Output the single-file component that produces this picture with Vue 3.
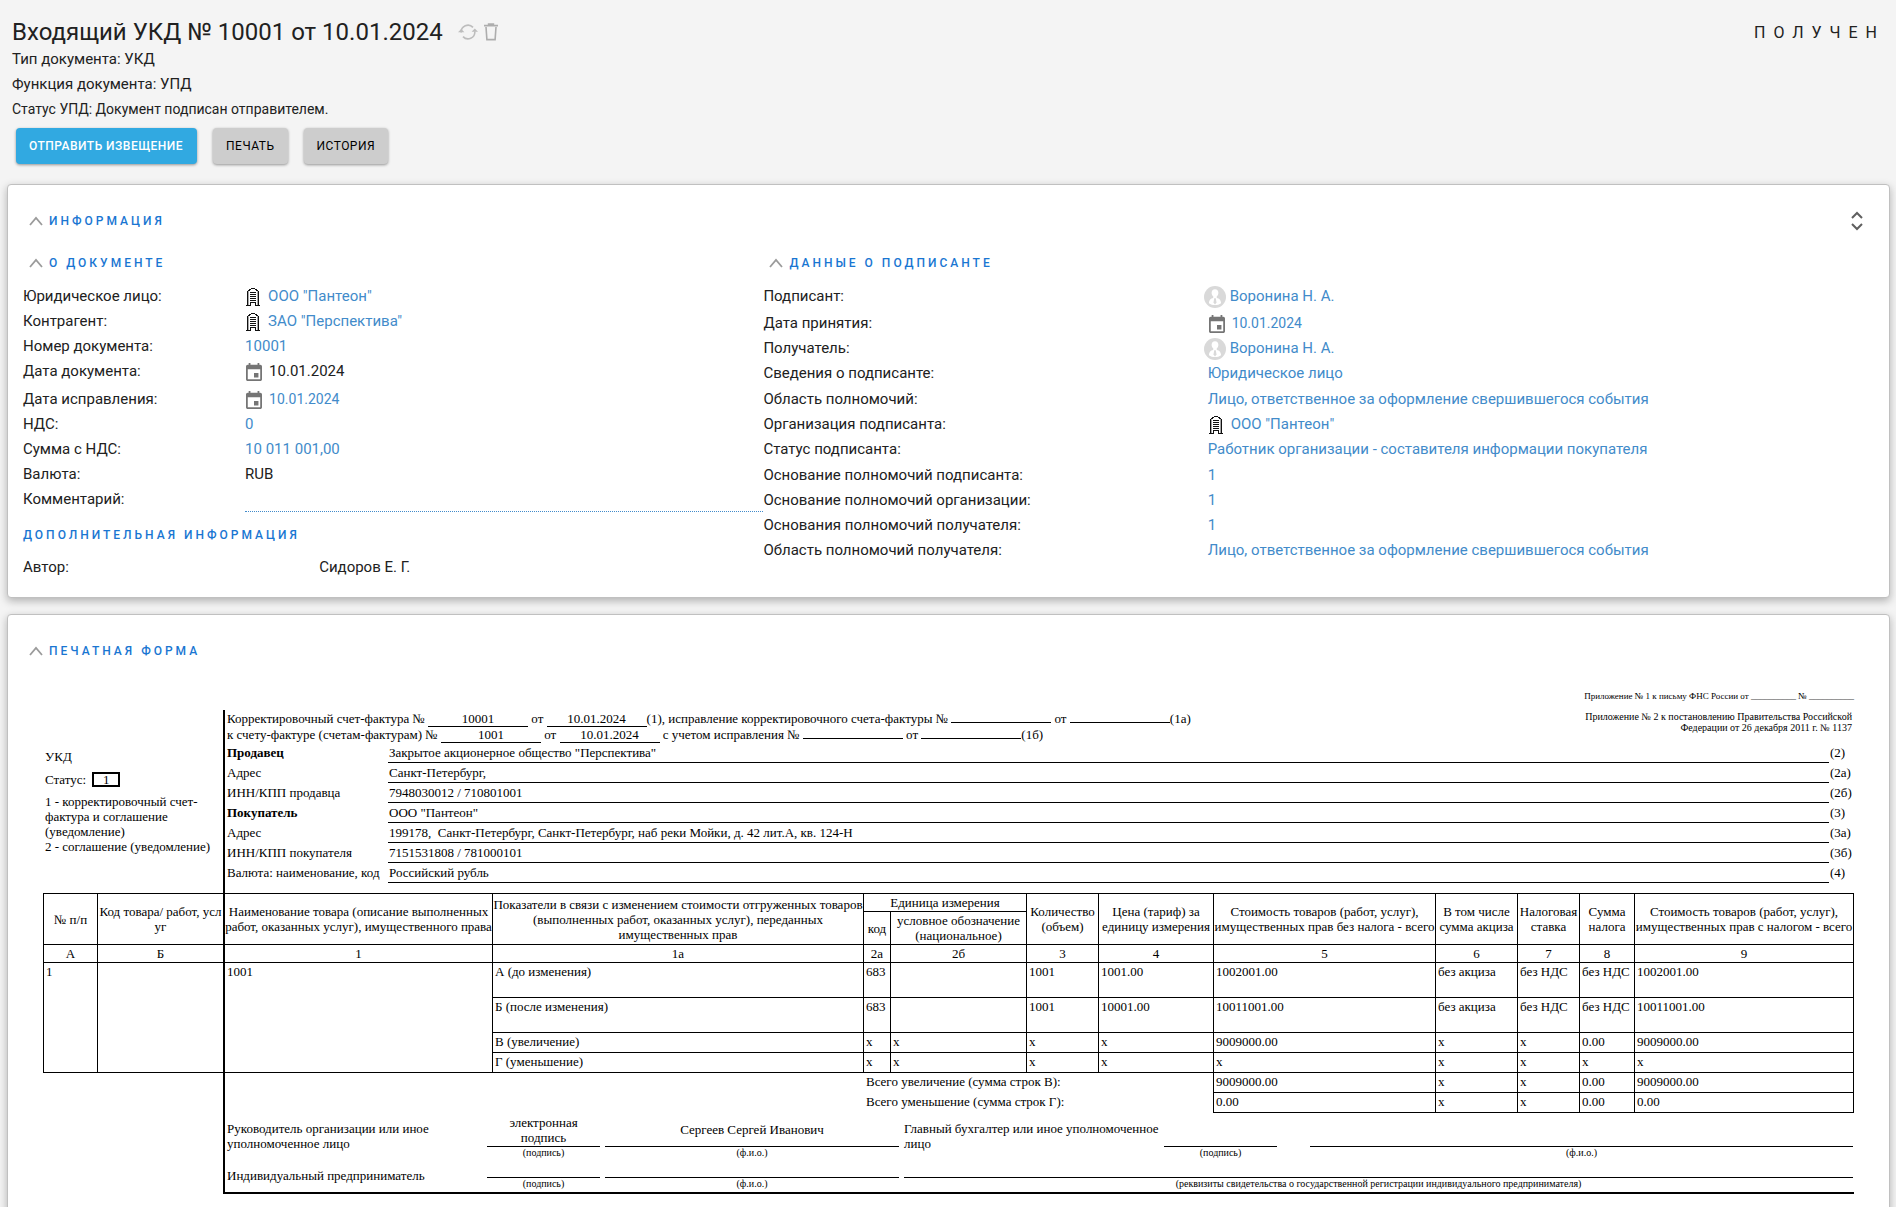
<script setup>
import { ref } from 'vue'

const comment = ref('')

const documentFacts = [
  { label: 'Юридическое лицо:', value: 'ООО "Пантеон"', icon: 'org', link: true },
  { label: 'Контрагент:', value: 'ЗАО "Перспектива"', icon: 'org', link: true },
  { label: 'Номер документа:', value: '10001', link: true },
  { label: 'Дата документа:', value: '10.01.2024', icon: 'date' },
  { label: 'Дата исправления:', value: '10.01.2024', icon: 'date', link: true, small: true },
  { label: 'НДС:', value: '0', link: true },
  { label: 'Сумма с НДС:', value: '10 011 001,00', link: true },
  { label: 'Валюта:', value: 'RUB' },
]

const signerFacts = [
  { label: 'Подписант:', value: 'Воронина Н. А.', icon: 'person', link: true },
  { label: 'Дата принятия:', value: '10.01.2024', icon: 'date', link: true, small: true },
  { label: 'Получатель:', value: 'Воронина Н. А.', icon: 'person', link: true },
  { label: 'Сведения о подписанте:', value: 'Юридическое лицо', link: true },
  { label: 'Область полномочий:', value: 'Лицо, ответственное за оформление свершившегося события', link: true, tall: true },
  { label: 'Организация подписанта:', value: 'ООО "Пантеон"', icon: 'org', link: true },
  { label: 'Статус подписанта:', value: 'Работник организации - составителя информации покупателя', link: true },
  { label: 'Основание полномочий подписанта:', value: '1', link: true, tall: true },
  { label: 'Основание полномочий организации:', value: '1', link: true },
  { label: 'Основания полномочий получателя:', value: '1', link: true },
  { label: 'Область полномочий получателя:', value: 'Лицо, ответственное за оформление свершившегося события', link: true },
]

const columns = [
  { facts: documentFacts, heading: 'О ДОКУМЕНТЕ', id: 'document' },
  { facts: signerFacts, heading: 'ДАННЫЕ О ПОДПИСАНТЕ', id: 'signer' },
]

const parties = [
  { label: 'Продавец', value: 'Закрытое акционерное общество "Перспектива"', code: '(2)', strong: true },
  { label: 'Адрес', value: 'Санкт-Петербург,', code: '(2а)' },
  { label: 'ИНН/КПП продавца', value: '7948030012 / 710801001', code: '(2б)' },
  { label: 'Покупатель', value: 'ООО "Пантеон"', code: '(3)', strong: true },
  { label: 'Адрес', value: '199178,\u00a0 Санкт-Петербург, Санкт-Петербург, наб реки Мойки, д. 42 лит.А, кв. 124-Н', code: '(3а)' },
  { label: 'ИНН/КПП покупателя', value: '7151531808 / 781000101', code: '(3б)' },
  { label: 'Валюта: наименование, код', value: 'Российский рубль', code: '(4)' },
]

const columnCodes = ['А', 'Б', '1', '1а', '2а', '2б', '3', '4', '5', '6', '7', '8', '9']

const lines = [
  { cells: ['А (до изменения)', '683', '', '1001', '1001.00', '1002001.00', 'без акциза', 'без НДС', 'без НДС', '1002001.00'], tall: true },
  { cells: ['Б (после изменения)', '683', '', '1001', '10001.00', '10011001.00', 'без акциза', 'без НДС', 'без НДС', '10011001.00'], tall: true },
  { cells: ['В (увеличение)', 'x', 'x', 'x', 'x', '9009000.00', 'x', 'x', '0.00', '9009000.00'] },
  { cells: ['Г (уменьшение)', 'x', 'x', 'x', 'x', 'x', 'x', 'x', 'x', 'x'] },
]

const totals = [
  { label: 'Всего увеличение (сумма строк В):', cells: ['9009000.00', 'x', 'x', '0.00', '9009000.00'] },
  { label: 'Всего уменьшение (сумма строк Г):', cells: ['0.00', 'x', 'x', '0.00', '0.00'] },
]
</script>

<template>
  <div class="page">
    <header class="top">
      <div class="top-line">
        <h1>Входящий УКД № 10001 от 10.01.2024</h1>
        <button type="button" class="icon-button refresh" aria-label="Обновить">
          <svg width="20" height="18" viewBox="0 0 20 18" fill="none" stroke="#bdbdbd" stroke-width="1.6">
            <path d="M3.2 9.5A6.8 6.8 0 0 1 15 4.400" />
            <path d="M16.8 8.5A6.8 6.8 0 0 1 5 13.600" />
            <path d="M0 9.300h6.400L3.200 12.400z" fill="#bdbdbd" stroke="none" transform="matrix(1 0 0 -1 0 18.500)" />
            <path d="M13.600 8.700H20L16.800 5.600z" fill="#bdbdbd" stroke="none" />
          </svg>
        </button>
        <button type="button" class="icon-button trash" aria-label="Удалить">
          <svg width="14" height="18" viewBox="0 0 14 18" fill="none" stroke="#adadad" stroke-width="1.6">
            <path d="M0 2.600h14M4.600 2.400V1h4.800v1.400" />
            <path d="M2 4l.9 12.600h8.200L12 4" />
          </svg>
        </button>
        <span class="status">ПОЛУЧЕН</span>
      </div>
      <p>Тип документа: УКД</p>
      <p>Функция документа: УПД</p>
      <p class="state">Статус УПД: Документ подписан отправителем.</p>
      <div class="actions">
        <button type="button" class="action primary">ОТПРАВИТЬ ИЗВЕЩЕНИЕ</button>
        <button type="button" class="action">ПЕЧАТЬ</button>
        <button type="button" class="action">ИСТОРИЯ</button>
      </div>
    </header>

    <main>
      <section class="card info">
        <div class="card-head">
          <button type="button" class="section-title">
            <svg width="14" height="10" viewBox="0 0 14 10" fill="none" stroke="#9b9b9b" stroke-width="1.8"><path d="M1 9l6-7 6 7" /></svg>
            ИНФОРМАЦИЯ
          </button>
          <button type="button" class="icon-button" aria-label="Свернуть всё">
            <svg width="12" height="20" viewBox="0 0 12 20" fill="none" stroke="#5f5f5f" stroke-width="2"><path d="M1 7l5-5 5 5M1 13l5 5 5-5" /></svg>
          </button>
        </div>
        <div class="columns">
          <div v-for="column in columns" :key="column.id" :class="['column', column.id]">
            <button type="button" class="section-title">
              <svg width="14" height="10" viewBox="0 0 14 10" fill="none" stroke="#9b9b9b" stroke-width="1.8"><path d="M1 9l6-7 6 7" /></svg>
              {{ column.heading }}
            </button>
            <div class="facts">
              <div v-for="fact in column.facts" :key="fact.label" :class="['fact', { tall: fact.tall, small: fact.small }]">
                <span class="label">{{ fact.label }}</span>
                <span :class="['value', fact.icon]">
                  <svg v-if="fact.icon === 'org'" width="14" height="18" viewBox="0 0 14 18" shape-rendering="crispEdges">
                    <path d="M1 3h1v14H1zM12 3h1v14h-1zM4 4h6v1H4zM4 6h6v1H4zM4 8h6v1H4zM4 10h6v1H4zM4 12h6v1H4zM4 14h6v1H4zM4 14h1v3H4zM9 14h1v3H9zM0 17h5v1H0zM9 17h5v1H9zM5 0h4v1H5zM3 1h2v1H3zM9 1h2v1H9zM2 2h2v1H2zM10 2h2v1h-2z" fill="#111" />
                    <path d="M2 3h1v14H2zM11 3h1v14h-1z" fill="#a6a6a6" />
                  </svg>
                  <svg v-else-if="fact.icon === 'date'" width="16" height="18" viewBox="3 1 18 20" preserveAspectRatio="none" fill="#757575">
                    <path d="M17 12h-5v5h5v-5zM16 1v2H8V1H6v2H5c-1.110 0-1.990.9-1.990 2L3 19c0 1.100.89 2 2 2h14c1.100 0 2-.9 2-2V5c0-1.100-.9-2-2-2h-1V1h-2zm3 18H5V8h14v11z" />
                  </svg>
                  <svg v-else-if="fact.icon === 'person'" width="22" height="22" viewBox="0 0 22 22">
                    <circle cx="11" cy="11" r="11" fill="#d9d9d9" />
                    <path d="M11 3.200c2.200 0 3.400 1.500 3.400 3.600 0 1.500-.7 3-1.700 3.800l.1 1.300c2.600.7 4 1.700 4.300 5.300-1.700 1.300-3.800 1.900-6.100 1.900s-4.400-.6-6.100-1.900c.3-3.600 1.700-4.600 4.300-5.300l.1-1.300c-1-.8-1.700-2.300-1.700-3.800 0-2.100 1.200-3.600 3.400-3.600z" fill="#fff" />
                    <path d="M10.200 12.300h1.600l.7 4.200-1.500 1.900-1.500-1.900z" fill="#d9d9d9" />
                  </svg>
                  <a v-if="fact.link" href="#">{{ fact.value }}</a>
                  <template v-else>{{ fact.value }}</template>
                </span>
              </div>
              <div v-if="column.id === 'document'" class="fact">
                <label class="label" for="comment">Комментарий:</label>
                <input id="comment" v-model="comment" class="value comment" type="text" />
              </div>
            </div>
            <template v-if="column.id === 'document'">
              <h2 class="section-title extra">ДОПОЛНИТЕЛЬНАЯ ИНФОРМАЦИЯ</h2>
              <div class="fact author">
                <span class="label">Автор:</span>
                <span class="value">Сидоров Е. Г.</span>
              </div>
            </template>
          </div>
        </div>
      </section>

      <section class="card print">
        <button type="button" class="section-title">
          <svg width="14" height="10" viewBox="0 0 14 10" fill="none" stroke="#9b9b9b" stroke-width="1.8"><path d="M1 9l6-7 6 7" /></svg>
          ПЕЧАТНАЯ ФОРМА
        </button>
        <div class="form">
          <p class="annex-letter">Приложение № 1 к письму ФНС России от __________ № __________</p>
          <div class="split">
            <div class="notes">
              <p>УКД</p>
              <p class="notes-status">Статус: <span class="status-box">1</span></p>
              <p>1 - корректировочный счет-фактура и соглашение (уведомление)</p>
              <p>2 - соглашение (уведомление)</p>
            </div>
            <div class="requisites">
              <div class="numbers">
                <div class="number-lines">
                  <p>Корректировочный счет-фактура № <span class="blank">10001</span> от <span class="blank">10.01.2024</span>(1), исправление корректировочного счета-фактуры № <span class="blank"></span> от <span class="blank"></span>(1а)</p>
                  <p>к счету-фактуре (счетам-фактурам) № <span class="blank">1001</span> от <span class="blank">10.01.2024</span> с учетом исправления № <span class="blank"></span> от <span class="blank"></span>(1б)</p>
                </div>
                <p class="annex-decree">Приложение № 2 к постановлению Правительства Российской<br />Федерации от 26 декабря 2011 г. № 1137</p>
              </div>
              <div v-for="party in parties" :key="party.code" class="party">
                <span :class="['party-label', { strong: party.strong }]">{{ party.label }}</span>
                <span class="party-value">{{ party.value }}</span>
                <span>{{ party.code }}</span>
              </div>
            </div>
          </div>

          <table>
            <colgroup>
              <col class="c-num" /><col class="c-code" /><col class="c-name" /><col class="c-metric" />
              <col class="c-unit" /><col class="c-unit-name" /><col class="c-qty" /><col class="c-price" />
              <col class="c-net" /><col class="c-excise" /><col class="c-rate" /><col class="c-tax" /><col class="c-gross" />
            </colgroup>
            <thead>
              <tr class="head-top">
                <th rowspan="2">№ п/п</th>
                <th rowspan="2" class="break">Код товара/ работ, услуг</th>
                <th rowspan="2">Наименование товара (описание выполненных работ, оказанных услуг), имущественного права</th>
                <th rowspan="2" class="set">Показатели в связи с изменением стоимости отгруженных товаров<br />(выполненных работ, оказанных услуг), переданных<br />имущественных прав</th>
                <th colspan="2">Единица измерения</th>
                <th rowspan="2">Количество (объем)</th>
                <th rowspan="2">Цена (тариф) за единицу измерения</th>
                <th rowspan="2" class="set">Стоимость товаров (работ, услуг),<br />имущественных прав без налога - всего</th>
                <th rowspan="2">В том числе сумма акциза</th>
                <th rowspan="2">Налоговая ставка</th>
                <th rowspan="2">Сумма налога</th>
                <th rowspan="2" class="set">Стоимость товаров (работ, услуг),<br />имущественных прав с налогом - всего</th>
              </tr>
              <tr class="head-units">
                <th>код</th>
                <th>условное обозначение (национальное)</th>
              </tr>
              <tr class="head-codes">
                <th v-for="code in columnCodes" :key="code">{{ code }}</th>
              </tr>
            </thead>
            <tbody>
              <tr v-for="(line, index) in lines" :key="index" :class="{ high: line.tall }">
                <template v-if="index === 0">
                  <td rowspan="4" class="first">1</td>
                  <td rowspan="4" class="open"></td>
                  <td rowspan="4" class="thick">1001</td>
                </template>
                <td v-for="(cell, cellIndex) in line.cells" :key="cellIndex">{{ cell }}</td>
              </tr>
            </tbody>
            <tfoot>
              <tr v-for="total in totals" :key="total.label">
                <td colspan="2" class="empty"></td>
                <td colspan="2" class="empty thick"></td>
                <td colspan="4" class="total-label">{{ total.label }}</td>
                <td v-for="(cell, cellIndex) in total.cells" :key="cellIndex">{{ cell }}</td>
              </tr>
            </tfoot>
          </table>

          <div class="split">
            <div></div>
            <div class="signatures">
              <div class="signer-row head-signer">
                <span class="role">Руководитель организации или иное уполномоченное лицо</span>
                <span class="line cap-2">электронная подпись</span>
                <span class="line cap-3">Сергеев Сергей Иванович</span>
                <span class="role accountant">Главный бухгалтер или иное уполномоченное<br />лицо</span>
                <span class="line cap-5"></span>
                <span class="line cap-7"></span>
                <small class="cap-2">(подпись)</small>
                <small class="cap-3">(ф.и.о.)</small>
                <small class="cap-5">(подпись)</small>
                <small class="cap-7">(ф.и.о.)</small>
              </div>
              <div class="signer-row own-signer">
                <span class="role">Индивидуальный предприниматель</span>
                <span class="line cap-2"></span>
                <span class="line cap-3"></span>
                <span class="line cap-wide"></span>
                <small class="cap-2">(подпись)</small>
                <small class="cap-3">(ф.и.о.)</small>
                <small class="cap-wide">(реквизиты свидетельства о государственной регистрации индивидуального предпринимателя)</small>
              </div>
            </div>
          </div>
        </div>
      </section>
    </main>
  </div>
</template>

<style>
body {
  background: #f4f4f4;
}
</style>

<style scoped>
* {
  box-sizing: border-box;
}

.page {
  height: 100vh;
  overflow: hidden;
  color: #212121;
  background: #f4f4f4;
  font-family: Roboto, "Noto Sans", sans-serif;
  font-size: 15px;
}

h1,
h2,
p {
  margin: 0;
}

button {
  margin: 0;
  padding: 0;
  border: 0;
  background: none;
  font-family: inherit;
  cursor: pointer;
}

a {
  color: #428bca;
  text-decoration: none;
}

svg {
  flex: none;
}

/* Document header */
.top {
  padding: 18px 11px 20px 12px;
}

.top-line {
  display: flex;
  align-items: center;
  height: 28px;
  margin-bottom: 1px;
}

h1 {
  font-size: 24px;
  font-weight: 400;
  line-height: 28px;
}

.icon-button {
  display: flex;
}

.refresh {
  margin-left: 15px;
}

.trash {
  margin-left: 6px;
}

.status {
  margin-left: auto;
  font-size: 16px;
  letter-spacing: 8px;
}

.top p {
  line-height: 25px;
}

.top .state {
  font-size: 14px;
}

.actions {
  display: flex;
  gap: 16px;
  padding: 6px 4px 0;
}

.action {
  height: 36px;
  padding: 0 13px 1px;
  border-radius: 4px;
  background: #cdcdcd;
  box-shadow: 0 1px 3px rgba(0, 0, 0, 0.4);
  color: #000;
  font-size: 12px;
  letter-spacing: 0.04em;
}

.primary {
  padding: 0 14px 1px 13px;
  background: #31a9e1;
  color: #fff;
  font-weight: 500;
}

/* Cards */
.card {
  margin: 0 6px 16px 7px;
  border: 1px solid #c0c0c0;
  border-radius: 4px;
  background: #fff;
  box-shadow: 0 3px 8px rgba(0, 0, 0, 0.28);
}

.info {
  padding: 24px 15px 17px;
}

.card-head {
  display: flex;
  align-items: center;
  justify-content: space-between;
  padding-right: 11px;
  margin-bottom: 18px;
}

.section-title {
  display: flex;
  align-items: center;
  gap: 6px;
  height: 24px;
  padding-left: 6px;
  color: #1976d2;
  font-size: 12px;
  font-weight: 500;
  letter-spacing: 3px;
}

.extra {
  margin: 11px 0 8px;
  padding-left: 0;
}

.columns {
  display: grid;
  grid-template-columns: 2fr 3fr;
}

.facts {
  margin-top: 9px;
}

.fact {
  display: grid;
  grid-template-columns: 30% 70%;
  height: 25px;
  line-height: 25px;
}

.signer .fact,
.author {
  grid-template-columns: 40% 60%;
}

.tall {
  height: 26px;
  padding-top: 1px;
}

.small {
  height: 28px;
  padding-top: 3px;
}

.signer .small {
  height: 27px;
  padding-top: 2px;
}

.small a {
  font-size: 14px;
}

.value {
  display: flex;
  align-items: center;
  min-width: 0;
  height: 25px;
}

.org {
  gap: 8px;
  padding-left: 1px;
}

.date {
  gap: 7px;
  padding-left: 1px;
}

.person {
  gap: 4px;
  margin-left: -4px;
}

.comment {
  width: 100%;
  padding: 0;
  border: 0;
  border-bottom: 1px dotted #428bca;
  background: none;
  color: #428bca;
  font: inherit;
  outline: none;
}

/* Print form */
.print {
  padding: 24px 35px 24px;
}

.print > .section-title {
  margin-left: -20px;
}

.form {
  padding-top: 27px;
  color: #000;
  font-family: "Liberation Serif", serif;
  font-size: 13px;
  line-height: 15px;
}

.annex-letter {
  margin-bottom: 8px;
  font-size: 9px;
  line-height: 12px;
  text-align: right;
}

.split {
  display: grid;
  grid-template-columns: 180fr 1631fr;
}

.notes {
  padding: 39px 0 0 2px;
}

.notes-status {
  display: flex;
  gap: 6px;
  margin: 8px 0 7px;
}

.status-box {
  width: 28px;
  height: 15px;
  border: 2px solid #000;
  line-height: 11px;
  text-align: center;
}

.requisites {
  padding-bottom: 10px;
  border-left: 2px solid #000;
}

.numbers {
  display: flex;
  justify-content: space-between;
  padding: 1px 2px 0;
  height: 33px;
  white-space: nowrap;
}

.number-lines p {
  height: 16px;
}

.blank {
  display: inline-block;
  width: 100px;
  border-bottom: 1px solid #000;
  text-align: center;
}

.annex-decree {
  font-size: 10px;
  line-height: 11px;
  text-align: right;
}

.party {
  display: grid;
  grid-template-columns: 163px 1fr 25px;
  height: 20px;
  line-height: 19px;
}

.party > span {
  padding-left: 1px;
}

.party > .party-label {
  padding-left: 2px;
}

.strong {
  font-weight: 700;
}

.party-value {
  border-bottom: 1px solid #000;
}

table {
  width: 100%;
  table-layout: fixed;
  border-spacing: 0;
}

.c-num { width: 55px; }
.c-code { width: 125px; }
.c-name { width: 270px; }
.c-metric { width: 371px; }
.c-unit { width: 27px; }
.c-unit-name { width: 136px; }
.c-qty { width: 72px; }
.c-price { width: 115px; }
.c-net { width: 222px; }
.c-excise { width: 82px; }
.c-rate { width: 62px; }
.c-tax { width: 55px; }
.c-gross { width: 219px; }

th,
td {
  height: 20px;
  padding: 1px 2px;
  border: solid #000;
  border-width: 0 1px 1px 0;
  text-align: left;
  vertical-align: top;
}

th {
  padding: 0;
  font-weight: 400;
  text-align: center;
  vertical-align: middle;
}

.head-top th {
  height: 19px;
  border-top-width: 1px;
}

.head-units th {
  height: 33px;
}

.head-codes th {
  height: 18px;
}

.head-top th:first-child,
.head-codes th:first-child,
.first {
  border-left-width: 1px;
}

.head-top th:nth-child(2),
.head-codes th:nth-child(2),
.open {
  border-right-width: 0;
}

.head-top th:nth-child(3),
.head-codes th:nth-child(3),
.thick {
  border-left-width: 2px;
}

.break {
  word-break: break-all;
}

.set {
  white-space: nowrap;
}

.high td {
  height: 35px;
}

.empty {
  border-right-width: 0;
  border-bottom-width: 0;
}

.total-label {
  border-bottom-width: 0;
}

.signatures {
  border-left: 2px solid #000;
  border-bottom: 2px solid #000;
}

.signer-row {
  display: grid;
  grid-template-columns: 257fr 113fr 294fr 255fr 113fr 23fr 543fr;
  column-gap: 5px;
  padding-right: 1px;
}

.head-signer {
  grid-template-rows: 34px 12px;
}

.own-signer {
  grid-template-rows: 19px 14px;
}

.role {
  grid-row: 1 / 3;
  grid-column: 1;
  align-self: center;
  padding-left: 2px;
}

.role.accountant {
  grid-column: 4;
  padding-left: 0;
  white-space: nowrap;
}

.line {
  display: flex;
  grid-row: 1;
  align-items: center;
  justify-content: center;
  border-bottom: 1px solid #000;
  text-align: center;
}

.signatures small {
  grid-row: 2;
  font-size: 10px;
  line-height: 12px;
  text-align: center;
}

.cap-2 { grid-column: 2; }
.cap-3 { grid-column: 3; }
.cap-5 { grid-column: 5; }
.cap-7 { grid-column: 7; }
.cap-wide { grid-column: 4 / 8; }
</style>
